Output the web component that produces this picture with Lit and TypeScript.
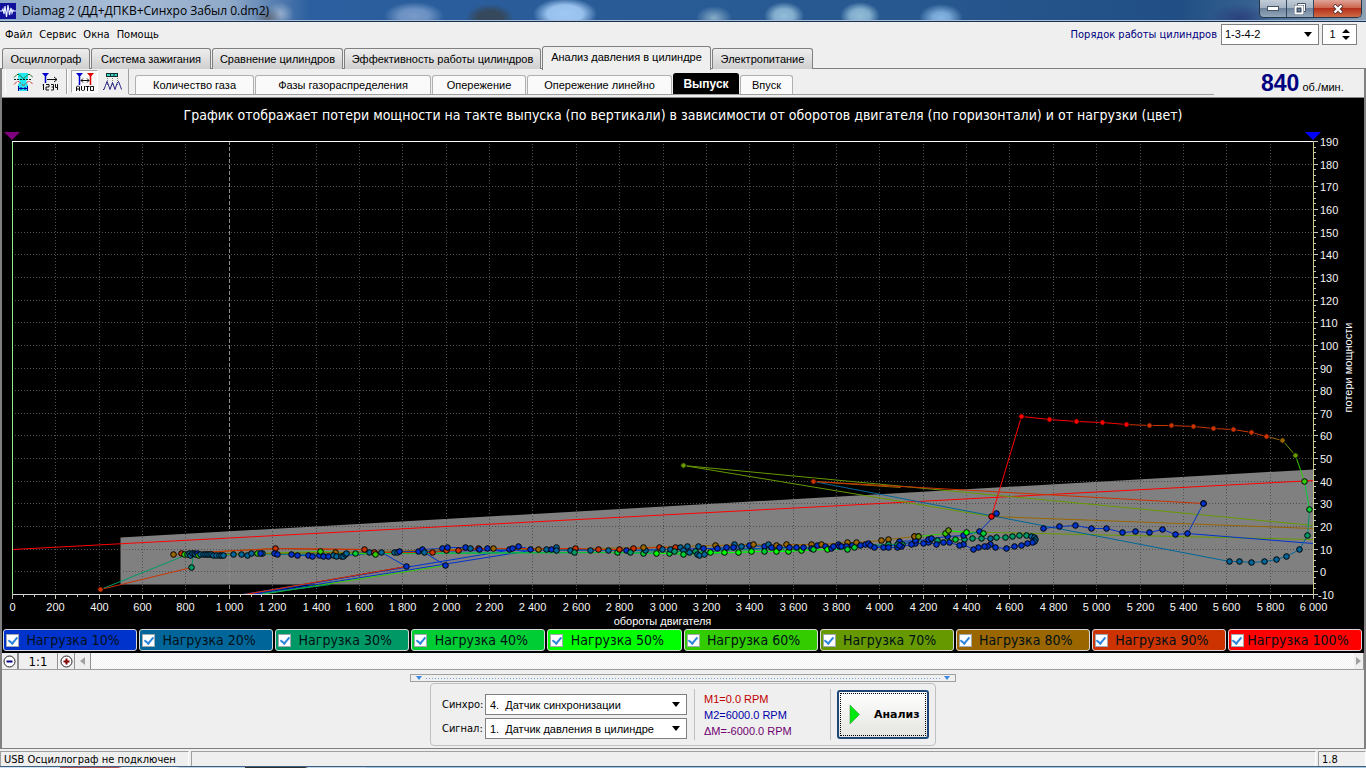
import { LitElement, html, svg, css } from "lit";
import { customElement, state } from "lit/decorators.js";
import { classMap } from "lit/directives/class-map.js";

const LOAD_COLORS = [
  "#0033cc", "#006699", "#009966", "#00cc33", "#00ff00",
  "#33cc00", "#669900", "#996600", "#cc3300", "#ff0000",
];

// Recorder units: 12..1313 covers 0..6000 rpm, 594..141 covers -10..190 loss.
const REC = { left: 12, right: 1313, top: 141, bottom: 594 };

// Each sample is "x,y,load" where load 1..10 stands for 10%..100%.
const parse = (s: string) =>
  s.trim().split(/\s+/).map((p) => p.split(",").map(Number));

const SWARM = parse(`
173,554,8 181,553,9 184,554,6 187,554,3 189,553,2 190,555,2 192,553,2 194,553,2 195,554,2 197,553,1
198,555,6 200,554,2 203,554,2 205,554,2 207,554,2 209,554,2 211,554,2 213,555,2 216,555,2 219,555,2
221,555,2 223,555,2 233,554,2 241,554,2 247,555,2 251,553,2 257,553,6 262,553,2 260,553,1 275,548,9
274,553,1 277,554,1 291,554,1 297,555,1 308,555,1 312,556,1 319,555,1 320,551,6 323,556,1 328,556,1
335,552,8 333,555,2 336,556,2 341,556,2 343,556,2 345,554,2 346,553,2 355,553,4 364,549,9 369,552,2
374,552,9 375,554,6 381,552,2 394,552,2 397,552,2 399,551,1 418,551,1 422,549,1 424,552,2 432,552,9
442,548,1 446,550,9 447,547,1 458,550,9 465,547,1 470,548,2 478,548,9 479,549,1 487,548,1 493,548,8
509,549,1 512,548,1 518,546,1 530,549,1 538,549,8 546,549,2 551,549,1 556,547,2 556,550,2 570,550,2
575,548,9 574,552,3 590,550,2 598,549,9 608,550,2 617,552,4 619,549,9 626,550,1 633,548,9 630,552,3
643,553,4 645,550,2 643,547,8 656,553,5 659,547,9 662,549,2 669,553,4 670,549,2 675,547,9 674,551,3
680,547,2 683,550,2 683,554,4 687,546,2 689,552,2 695,551,3 698,546,2 697,554,2 699,555,2 704,554,2 703,548,1
710,552,5 715,545,8 717,548,1 724,552,5 726,547,1 734,544,2 733,547,1 738,552,5 741,546,2 749,545,1
753,544,8 751,551,5 764,546,1 764,551,4 768,544,2 771,547,1 776,545,8 776,551,5 779,547,1 786,544,8
788,551,5 789,547,1 796,547,1 801,550,5 803,547,1 811,544,8 811,548,1 813,549,4 817,545,1 821,544,8
825,546,1 827,549,5 831,548,1 833,546,1 838,544,1 839,546,1 841,546,1 847,542,8 846,546,1 847,549,4
852,545,1 856,542,8 854,547,4 860,545,1 865,544,1 868,543,1 870,545,1 874,547,1 881,540,8 883,547,1
888,539,8 888,544,3 888,547,1 897,547,1 899,541,1 902,544,3 914,536,8 915,540,1 918,536,7`);

const TRACES = [
  // upper returning branch and the loop near 4 700 rpm
  `897,544,3 915,541,3 929,541,3 937,540,3 955,539,4 964,539,3 972,538,3 981,538,3 990,538,2 996,537,3 1005,537,3 1012,536,3
   1019,535,3 1026,535,3 1031,536,2 1034,537,2 1035,539,2 1034,541,2 1032,542,1 1027,543,1 1021,545,1 1014,546,1 1006,548,1
   995,547,1 990,544,1 987,546,1 984,546,1 978,547,1 973,549,1 963,544,1 959,545,1 949,542,1 943,542,1 936,544,1
   928,542,1 923,543,1 915,543,1 911,544,1 901,546,1`,
  `899,545,1 915,540,1 928,539,1 931,538,1 947,536,1 963,535,1 979,531,1 996,513,1 991,516,10 1021,416,10`,
  `914,536,8 918,536,7 945,533,6 948,530,7 966,532,5 983,533,4`,
  // full-load sweep
  `1021,416,10 1049,419,10 1076,421,10 1102,422,10 1126,424,10 1149,425,9 1171,425,9 1193,426,9 1213,428,9 1233,429,9
   1251,432,9 1266,436,9 1282,440,8 1295,455,7 1304,481,6 1309,509,4 1307,535,3 1299,549,2 1286,556,2 1276,559,2
   1264,561,2 1251,562,2 1239,561,2 1229,561,2 813,481,2`,
  `813,481,9 1203,503,9 1203,503,1 1187,533,1 1175,534,1 1162,529,1 1149,532,1 1135,531,1 1122,532,1 1106,528,1 1091,528,1
   1075,525,1 1059,526,1 1043,528,1`,
  `683,465,7`, `100,589,9`, `191,567,3`, `406,566,1`, `445,565,1`,
].map(parse);

// Plain links between distant samples: x1,y1,x2,y2,load.
const LINKS = [
  [12, 549, 1313, 480, 10], [683, 465, 1313, 525, 7], [683, 465, 991, 516, 7], [991, 516, 1313, 528, 8],
  [813, 481, 900, 487, 8], [948, 531, 1313, 539, 7], [1187, 533, 1313, 543, 1], [100, 589, 187, 554, 3],
  [100, 589, 191, 567, 9], [191, 567, 193, 554, 3], [242, 594, 525, 547, 1], [246, 594, 406, 566, 10],
  [250, 594, 406, 566, 1], [254, 594, 530, 550, 1], [244, 594, 406, 566, 9], [260, 594, 445, 565, 6],
  [262, 593, 330, 584, 3], [381, 552, 406, 566, 1], [424, 552, 445, 565, 1], [181, 553, 275, 548, 8],
  [275, 548, 364, 549, 9], [447, 550, 487, 549, 9], [399, 551, 600, 549, 1], [710, 549, 900, 545, 1],
];

const MAIN_TABS = ["Осциллограф", "Система зажигания", "Сравнение цилиндров", "Эффективность работы цилиндров", "Анализ давления в цилиндре", "Электропитание"];
const SUB_TABS = ["Количество газа", "Фазы газораспределения", "Опережение", "Опережение линейно", "Выпуск", "Впуск"];

@customElement("power-loss-chart")
class PowerLossChart extends LitElement {
  @state() private w = 1362;
  @state() private h = 502;
  private ro?: ResizeObserver;

  static styles = css`
    :host { display: block; flex: 1; min-height: 0; overflow: hidden; }
    svg { display: block; width: 100%; height: 100%; }
    text { font: 11px "Liberation Sans", Arial, sans-serif; fill: #f4f4f4; }
    .grid { stroke: #505050; stroke-dasharray: 1 2; }
    .ref { stroke: #8c8c8c; stroke-dasharray: 4 2; }
    .tick { stroke: #c8c8b8; }
    .mid { text-anchor: middle; }
    .axis { font-size: 11px; fill: #ffffff; text-anchor: middle; }
  `;

  connectedCallback() {
    super.connectedCallback();
    this.ro = new ResizeObserver(() => {
      this.w = this.clientWidth;
      this.h = this.clientHeight;
    });
    this.ro.observe(this);
  }
  disconnectedCallback() {
    this.ro?.disconnect();
    super.disconnectedCallback();
  }

  render() {
    const L = 10, R = this.w - 51, T = 15, B = this.h - 35;
    const kx = (R - L) / (REC.right - REC.left), ky = (B - T) / (REC.bottom - REC.top);
    const X = (x: number) => L + (x - REC.left) * kx + 0.5;
    const Y = (y: number) => T + (y - REC.top) * ky + 0.5;
    const rx = (rpm: number) => Math.round(L + ((R - L) * rpm) / 6000) + 0.5;
    const ly = (v: number) => Math.round(B - ((B - T) * (v + 10)) / 200) + 0.5;
    const xs = Array.from({ length: 31 }, (_, i) => i * 200);
    const ys = Array.from({ length: 21 }, (_, i) => i * 10 - 10);
    const xm = Array.from({ length: 121 }, (_, i) => i * 50);
    const ym = Array.from({ length: 81 }, (_, i) => i * 2.5 - 10);
    const label = (n: number) => (n < 1000 ? String(n) : `${Math.floor(n / 1000)} ${String(n % 1000).padStart(3, "0")}`);
    const dot = (p: number[]) => svg`<circle cx=${X(p[0])} cy=${Y(p[1])} r="2.8" fill=${LOAD_COLORS[p[2] - 1]} stroke="#000"></circle>`;
    const seg = (a: number[], b: number[], c: number) => svg`<line x1=${X(a[0])} y1=${Y(a[1])} x2=${X(b[0])} y2=${Y(b[1])} stroke=${LOAD_COLORS[c - 1]}></line>`;
    const band = LOAD_COLORS.map((c, i) => {
      const pts = SWARM.filter((p) => p[2] === i + 1);
      return svg`<polyline fill="none" stroke=${c} points=${pts.map((p) => `${X(p[0])},${Y(p[1])}`).join(" ")}></polyline>`;
    });
    return html`<svg role="img" aria-label="Потери мощности от оборотов двигателя">
      <polygon fill="#808080" points="${X(120)},${Y(537)} ${X(1313)},${Y(469)} ${X(1313)},${Y(584)} ${X(120)},${Y(584)}"></polygon>
      ${xs.slice(1, 30).map((v) => svg`<line class=${v === 1000 ? "ref" : "grid"} x1=${rx(v)} x2=${rx(v)} y1=${T} y2=${B}></line>`)}
      ${ys.slice(1, 20).map((v) => svg`<line class="grid" x1=${L} x2=${R} y1=${ly(v)} y2=${ly(v)}></line>`)}
      ${LINKS.map((l) => seg([l[0], l[1]], [l[2], l[3]], l[4]))}
      ${band}
      ${TRACES.map((t) => t.slice(1).map((p, i) => seg(t[i], p, p[2])))}
      ${SWARM.map(dot)}
      ${TRACES.map((t) => t.filter((p, i) => !(i === t.length - 1 && t.length > 1 && p[0] === 813)).map(dot))}
      <path d="M${L + 0.5} ${T + 0.5}V${B}" stroke="#90ee90"></path>
      <path d="M${R + 0.5} ${T + 0.5}V${B}" stroke="#c8c882"></path>
      <path d="M${L} ${T + 0.5}H${R}" stroke="#fff"></path>
      <path d="M${L} ${B + 0.5}H${R + 5}" stroke="#d8d8d8"></path>
      ${xm.map((v) => svg`<line class="tick" x1=${rx(v)} x2=${rx(v)} y1=${B} y2=${B + (v % 200 ? 3 : 5)}></line>`)}
      ${ym.map((v) => svg`<line class="tick" x1=${R} x2=${R + (v % 10 ? 3 : 5)} y1=${ly(v)} y2=${ly(v)}></line>`)}
      ${xs.map((v) => svg`<text class="mid" x=${rx(v)} y=${B + 17}>${label(v)}</text>`)}
      ${ys.map((v) => svg`<text x=${R + (v < 0 ? 5 : 7)} y=${ly(v) + 4}>${v}</text>`)}
      <text class="axis" x=${(L + R) / 2} y=${B + 31}>обороты двигателя</text>
      <text class="axis" transform="translate(${R + 39} ${T + (B - T) / 2}) rotate(-90)">потери мощности</text>
      <path d="M${L - 8} ${T - 9}h16l-8 8z" fill="#800080"></path>
      <path d="M${R - 8} ${T - 9}h16l-8 8z" fill="#0000ff"></path>
    </svg>`;
  }
}

const arrow = html`<svg class="arrow" width="8" height="5" viewBox="0 0 8 5"><path d="M0 0h8L4 5z" fill="#000"></path></svg>`;

@customElement("app-root")
class AppRoot extends LitElement {
  @state() private tab = 4;
  @state() private sub = 4;
  @state() private order = 1;

  static styles = css`
    :host { display: flex; flex-direction: column; height: 100vh; min-height: 560px; overflow: hidden; background: #efefef; color: #000; font: 11px "Liberation Sans", Arial, sans-serif; }
    * { box-sizing: border-box; }
    button, input, select { font: inherit; color: inherit; margin: 0; padding: 0; border: 0; border-radius: 0; background: none; }
    .titlebar { flex: none; height: 22px; display: flex; align-items: center; border-bottom: 1px solid #1b304c; box-shadow: inset 0 -1px #a8bfda;
      background:
        radial-gradient(ellipse 24px 14px at 490px 18px, #39434ccc, #39434ccc 50%, transparent),
        radial-gradient(ellipse 32px 16px at 565px 14px, #a9d0fbee, #a9d0fbdd 55%, transparent),
        radial-gradient(ellipse 18px 12px at 714px 18px, #9fc2d4cc, transparent),
        radial-gradient(ellipse 20px 14px at 784px 16px, #a2cbe2dd, #a2cbe2bb 50%, transparent),
        radial-gradient(ellipse 20px 14px at 860px 16px, #a2cbe2dd, #a2cbe2bb 50%, transparent),
        radial-gradient(ellipse 22px 14px at 941px 18px, #94c4f0dd, #94c4f0bb 40%, transparent),
        radial-gradient(ellipse 30px 14px at 414px 16px, #8aa9d4cc, #8aa9d4aa 50%, transparent),
        radial-gradient(ellipse 30px 14px at 1240px 18px, #2b3a7acc, transparent),
        radial-gradient(ellipse 14px 12px at 268px 18px, #5d6470cc, transparent),
        radial-gradient(ellipse 14px 12px at 280px 14px, #a9bdd4cc, transparent),
        linear-gradient(90deg, #8ba7c9 0, #a9bdd6 120px, #8fa9c9 230px, #5d83b3 270px, #2b5f9f 310px, #27588f 900px, #214f85 1180px, #35608f 1250px, #8fa2b4 100%); }
    .logo { flex: none; margin-right: 6px; }
    .title { margin: 0; font: 12px "Open Sans", "Noto Sans", sans-serif; flex: 1; color: #000; }
    .winbtns { align-self: flex-start; display: flex; height: 18px; margin-right: 4px; border: 1px solid #23354b; border-top: 0; border-radius: 0 0 5px 5px; overflow: hidden; }
    .winbtn { width: 27px; display: grid; place-items: center; border-right: 1px solid #33475f; background: linear-gradient(#c3cdd8 0, #a5b3c3 45%, #6f849c 50%, #93a6ba 100%); }
    .close { width: 47px; border: 0; background: linear-gradient(#e0a497 0, #cc6650 45%, #b5301a 50%, #cf6a45 100%); }
    .menubar { flex: none; height: 24px; display: flex; align-items: center; padding-right: 9px; font: 11px "DejaVu Sans Condensed", "Noto Sans", sans-serif; }
    .menu { display: flex; flex: 1; gap: 7px; padding-left: 5px; }
    .menu button { padding-top: 1px; }
    .order { display: flex; align-items: center; gap: 4px; color: #000080; font-family: "DejaVu Sans Condensed", sans-serif; }
    .field { display: grid; align-items: center; background: #fff; border: 1px solid #7f7f7f; color: #000; height: 21px; }
    .field select { grid-area: 1 / 1; width: 100%; height: 100%; appearance: none; outline: 0; padding-left: 4px; }
    .arrow { grid-area: 1 / 1; justify-self: end; margin-right: 6px; pointer-events: none; }
    .f-order { width: 98px; }
    .f-order select { padding-left: 3px; font: 11px "Liberation Sans", sans-serif; }
    .spin { grid-template-columns: 1fr 14px; width: 35px; margin-left: -1px; font: 11px "Liberation Sans", sans-serif; }
    .spin input { appearance: textfield; width: 100%; text-align: center; outline: 0; }
    .spin input::-webkit-inner-spin-button { appearance: none; }
    .spinbtns { display: grid; gap: 3px; padding-right: 4px; }
    .spinbtns button { display: grid; }
    .tabs { flex: none; height: 23px; display: grid; grid-template-columns: 88px 120px 131px 197px 169px 101px; gap: 1px; align-items: end; padding-left: 2px; border-bottom: 1px solid #808080; }
    .tab { height: 21px; border: 1px solid #808080; border-bottom: 0; border-radius: 3px 3px 0 0; background: linear-gradient(#eeeeee, #cfcfcf); white-space: nowrap; }
    .tab.on { height: 24px; padding-bottom: 3px; margin-bottom: -1px; background: #efefef; }
    .body { flex: 1; min-height: 0; display: flex; flex-direction: column; border: solid #808080; border-width: 0 2px 1px; }
    .toolbar { flex: none; height: 29px; display: flex; align-items: flex-start; padding-left: 3px; border-bottom: 1px solid #8a8a8a; }
    .tools { display: flex; flex: none; height: 25px; align-items: center; border-right: 1px solid #a0a0a0; padding: 0 3px; border-left: 1px solid #fff; }
    .tools button { width: 27px; height: 23px; display: grid; place-items: center; }
    .tools button.down { border: 1px solid #a8a8a8; background: #f9f9f9; border-right-color: #fff; border-bottom-color: #fff; }
    .subs { flex: 1; height: 26px; display: grid; grid-template-columns: 119px 176px 94px 145px 66px 53px; gap: 1px; align-items: end; padding-left: 6px; border-bottom: 1px solid #a0a0a0; }
    .sub { height: 19px; border: 1px solid #b0b0b0; border-bottom: 0; border-radius: 3px 3px 0 0; background: #fafafa; white-space: nowrap; }
    .sub.on { height: 21px; border-color: #000; background: #000; color: #fff; font-weight: bold; font-size: 12px; }
    .rpm { display: flex; align-items: baseline; gap: 3px; width: 150px; padding-left: 47px; white-space: nowrap; line-height: 28px; }
    .rpm b { color: #000080; font-size: 23px; }
    .chart { flex: 1; min-height: 0; display: flex; flex-direction: column; background: #000; }
    .caption { flex: none; margin: 0; height: 28px; padding: 7px 0 0; text-align: center; color: #fff; font: 14px/20px "DejaVu Sans Condensed", Verdana, sans-serif; white-space: nowrap; }
    .legend { flex: none; display: grid; grid-template-columns: repeat(10, 1fr); gap: 2px; padding: 0 2px 2px 1px; }
    .item { display: flex; align-items: center; height: 22px; padding: 0 9px 0 2px; border: 1px solid #d8d8d8; border-radius: 3px; font: 14px "DejaVu Sans Condensed", Verdana, sans-serif; white-space: nowrap; color: #001018; }
    .item span { flex: 1; text-align: center; }
    .item input { appearance: none; flex: none; width: 13px; height: 13px; background: #fff; border: 1px solid #a0a8b0; display: grid; place-items: center; }
    .item input:checked::after { content: ""; width: 4px; height: 7px; margin-top: -2px; border: solid #2f86de; border-width: 0 2px 2px 0; rotate: 40deg; }
    .l1 { background: #0033cc; } .l2 { background: #006699; } .l3 { background: #009966; } .l4 { background: #00cc33; } .l5 { background: #00ff00; }
    .l6 { background: #33cc00; } .l7 { background: #669900; } .l8 { background: #996600; } .l9 { background: #cc3300; } .l10 { background: #ff0000; }
    .zoombar { flex: none; height: 17px; display: flex; border-bottom: 1px solid #9c9c9c; background: #f7f7f7; }
    .zoombar button { width: 16px; display: grid; place-items: center; background: #efefef; border-right: 1px solid #909090; }
    .zoombar .ratio { width: 40px; font: 13px "DejaVu Sans Condensed", sans-serif; border-left: 1px solid #909090; margin-right: 1px; }
    .track { flex: 1; background: repeating-conic-gradient(#ffffff 0 25%, #f0f0f0 0 50%) 0 0 / 2px 2px; }
    .zoombar .end { width: 10px; }
    .panel { flex: none; height: 78px; display: flex; flex-direction: column; align-items: center; padding-top: 4px; }
    .splitter { width: 546px; height: 8px; border: 1px solid #a0a0a0; display: flex; align-items: center; justify-content: space-between; gap: 4px; padding: 0 5px; }
    .splitter i { flex: 1; height: 1px; background: repeating-linear-gradient(90deg, #6aa7e6 0 1px, transparent 1px 3px); }
    .group { display: flex; width: 506px; height: 63px; margin-top: 1px; border: 1px solid #c0c0c0; border-radius: 4px; padding: 5px 4px 5px 11px; }
    .pick { display: grid; grid-template-columns: 43px 202px; row-gap: 3px; align-content: center; align-items: center; padding-top: 4px; font-family: "DejaVu Sans Condensed", sans-serif; }
    .pick .field { font-family: "Liberation Sans", sans-serif; }
    .marks { margin: 0 6px 0 7px; width: 137px; border: solid #c0c0c0; border-width: 0 1px; padding: 2px 0 0 9px; line-height: 16px; list-style: none; font-size: 11px; }
    .m1 { color: #c00000; } .m2 { color: #0000a8; } .m3 { color: #700070; }
    .analyze { width: 92px; height: 49px; margin-top: 1px; border: 2px solid #1d4777; border-radius: 3px; padding: 1px; background: linear-gradient(#ffffff, #e4e4e0); font: bold 11px "DejaVu Sans", sans-serif; }
    .analyze span { height: 100%; display: flex; align-items: center; gap: 14px; padding-left: 8px; border: 1px dotted #000; }
    .status { flex: none; height: 15px; margin-top: 2px; display: grid; grid-template-columns: 189px 1fr 48px; gap: 2px; font: 11px "DejaVu Sans Condensed", sans-serif; }
    .status div { border: 1px solid #a0a0a0; border-right-color: #fff; border-bottom: 0; padding: 1px 0 0 3px; white-space: nowrap; }
    .edge { flex: none; height: 2px; border-top: 1px solid #3d5f80; background: linear-gradient(90deg, #cfe0f0 60px, #b05050 60px 118px, #f4f4f4 122px 176px, #c0d4e8 180px 245px, #303030 245px 305px, #c0d4e8 308px 366px, #a9c4dd 366px); }
  `;

  render() {
    return html`
      <header class="titlebar">
        <svg class="logo" width="16" height="16" viewBox="0 0 16 16"><rect width="16" height="16" fill="#10109a"></rect><path d="M0 8h2l1-2 1 5 1-8 1.500 11L8 2l1.500 10L11 5l1 5 1-3 1 1h2" fill="none" stroke="#e6f0ff" stroke-width="1.200"></path></svg>
        <h1 class="title">Diamag 2 (ДД+ДПКВ+Синхро Забыл 0.dm2)</h1>
        <div class="winbtns">
          <button class="winbtn" aria-label="Свернуть"><svg width="12" height="5" viewBox="0 0 12 5"><rect x=".5" y=".5" width="11" height="4" fill="#fff" stroke="#455468"></rect></svg></button>
          <button class="winbtn" aria-label="Развернуть"><svg width="12" height="12" viewBox="0 0 12 12"><path d="M3.500.5h8v8h-2v-6h-6z" fill="#fff" stroke="#455468"></path><rect x="1.500" y="3.500" width="7" height="7" fill="none" stroke="#455468" stroke-width="3"></rect><rect x="1.500" y="3.500" width="7" height="7" fill="none" stroke="#fff" stroke-width="2"></rect><rect x="3.500" y="5.500" width="3" height="3" fill="none" stroke="#455468"></rect></svg></button>
          <button class="winbtn close" aria-label="Закрыть"><svg width="12" height="10" viewBox="0 0 12 10"><path d="M2 1l8 8M10 1l-8 8" stroke="#5a3030" stroke-width="4"></path><path d="M2.500 1.500l7 7M9.500 1.500l-7 7" stroke="#fff" stroke-width="2.400"></path></svg></button>
        </div>
      </header>
      <div class="menubar">
        <nav class="menu"><button>Файл</button><button>Сервис</button><button>Окна</button><button>Помощь</button></nav>
        <div class="order">
          <label for="order">Порядок работы цилиндров</label>
          <span class="field f-order"><select id="order"><option>1-3-4-2</option><option>1-2-4-3</option></select>${arrow}</span>
          <span class="field spin">
            <input type="number" aria-label="Цилиндр" .value=${String(this.order)}>
            <span class="spinbtns">
              <button aria-label="Больше" @click=${() => (this.order = Math.min(4, this.order + 1))}><svg width="8" height="4" viewBox="0 0 8 4"><path d="M0 4h8L4 0z"></path></svg></button>
              <button aria-label="Меньше" @click=${() => (this.order = Math.max(1, this.order - 1))}><svg width="8" height="4" viewBox="0 0 8 4"><path d="M0 0h8L4 4z"></path></svg></button>
            </span>
          </span>
        </div>
      </div>
      <div class="tabs" role="tablist">
        ${MAIN_TABS.map((t, i) => html`<button role="tab" class=${classMap({ tab: true, on: i === this.tab })} @click=${() => (this.tab = i)}>${t}</button>`)}
      </div>
      <main class="body">
        <div class="toolbar">
          <div class="tools">
            <button aria-label="Окно усреднения"><svg width="20" height="20" viewBox="0 0 20 20" fill="none"><path d="M5 1h10v5l-2 3.500 2 3.500v6H5v-6l2-3.500L5 6z" fill="#20e8f0"></path><path d="M1 5.500l3-3h2l3 3 1.500 1 1.500-1 3-3h2l3 3" stroke="#207030"></path><path d="M1 12.500l3-3h2l3 3 1.500 1 1.500-1 3-3h2l3 3" stroke="#c03030" stroke-dasharray="4 1"></path><path d="M1 7.500h18" stroke="#002020" stroke-dasharray="2 1"></path><path d="M5.500 14v5M14.500 14v5M6 16.500h8M8 15v3M12 15v3" stroke="#0000a0"></path></svg></button>
            <button aria-label="Маркер по номеру"><svg width="18" height="19" viewBox="0 0 18 19" fill="none"><path d="M1 1h7L4.500 5z" fill="#0000d0"></path><path d="M4.500 4v7" stroke="#0000d0" stroke-width="1.500"></path><path d="M6 7.500h10M13 5l3 2.500-3 2.500M2.500 12v6M1.500 13h1M5 12.500h3v2.500H5v3h3M10 12.500h2.500v5.500H10M10.500 15h2M14.500 12v3.500H17M16.500 12v6" stroke="#101010"></path></svg></button>
          </div>
          <div class="tools">
            <button class="down" aria-label="Авто маркеры"><svg width="20" height="20" viewBox="0 0 20 20" fill="none"><path d="M1 1h7L4.500 5z" fill="#0000d0"></path><path d="M4.500 4v9" stroke="#0000d0" stroke-width="1.500"></path><path d="M12 1h7l-3.500 4z" fill="#e00000"></path><path d="M15.500 4v9" stroke="#e00000" stroke-width="1.500"></path><path d="M6 8.500h8M8 6.500l-2 2 2 2M12 6.500l2 2-2 2M1.500 19v-4l1-1h1l1 1v4M1.500 17h3M6.500 14v4l1 .5h1l1-.5v-4M10.500 14.500h4M12.500 14.500V19M15.500 14.500h3v4h-3z" stroke="#101010"></path></svg></button>
            <button aria-label="Циклы"><svg width="20" height="19" viewBox="0 0 20 19" fill="none"><rect x="4.500" y="1.500" width="11" height="3" fill="#40d0c0" stroke="#103030"></rect><path d="M8.500 1v4M12 1v4" stroke="#103030"></path><path d="M5.500 6v8M10.500 6v8M15.500 6v8" stroke="#808080" stroke-dasharray="1 1"></path><path d="M1 17.500h1l1.500-4 1.500-4 2 5 1 3 2.500-7 2.500 7 2-6 1.500-2 2 5 1 3" stroke="#202080"></path></svg></button>
          </div>
          <div class="subs" role="tablist">
            ${SUB_TABS.map((t, i) => html`<button role="tab" class=${classMap({ sub: true, on: i === this.sub })} @click=${() => (this.sub = i)}>${t}</button>`)}
          </div>
          <div class="rpm"><b>840</b><span>об./мин.</span></div>
        </div>
        <section class="chart">
          <h2 class="caption">График отображает потери мощности на такте выпуска (по вертикали) в зависимости от оборотов двигателя (по горизонтали) и от нагрузки (цвет)</h2>
          <power-loss-chart></power-loss-chart>
          <div class="legend">
            ${LOAD_COLORS.map((_, i) => html`<label class="item l${i + 1}"><input type="checkbox" checked><span>Нагрузка ${(i + 1) * 10}%</span></label>`)}
          </div>
        </section>
        <div class="zoombar">
          <button aria-label="Уменьшить"><svg width="13" height="13" viewBox="0 0 13 13"><circle cx="6.500" cy="6.500" r="5.500" fill="#fff" stroke="#202020"></circle><path d="M3.500 6.500h6" stroke="#000080" stroke-width="2"></path></svg></button>
          <button class="ratio">1:1</button>
          <button aria-label="Увеличить"><svg width="13" height="13" viewBox="0 0 13 13"><circle cx="6.500" cy="6.500" r="5.500" fill="#fff" stroke="#202020"></circle><path d="M3.500 6.500h6M6.500 3.500v6" stroke="#800000" stroke-width="2"></path></svg></button>
          <button aria-label="Влево"><svg width="5" height="8" viewBox="0 0 5 8"><path d="M5 0v8L0 4z" fill="#a0a0a0"></path></svg></button>
          <div class="track"></div>
          <button class="end" aria-label="Вправо"><svg width="5" height="8" viewBox="0 0 5 8"><path d="M0 0v8l5-4z" fill="#a0a0a0"></path></svg></button>
        </div>
        <section class="panel">
          <div class="splitter"><svg width="6" height="4"><path d="M0 0h6L3 4z" fill="#3b8ae0"></path></svg><i></i><svg width="6" height="4"><path d="M0 0h6L3 4z" fill="#3b8ae0"></path></svg></div>
          <div class="group">
            <div class="pick">
              <label for="sync">Синхро:</label>
              <span class="field"><select id="sync"><option>4.&nbsp; Датчик синхронизации</option></select>${arrow}</span>
              <label for="signal">Сигнал:</label>
              <span class="field"><select id="signal"><option>1.&nbsp; Датчик давления в цилиндре</option></select>${arrow}</span>
            </div>
            <ul class="marks"><li class="m1">M1=0.0 RPM</li><li class="m2">M2=6000.0 RPM</li><li class="m3">ΔM=-6000.0 RPM</li></ul>
            <button class="analyze"><span><svg width="11" height="19" viewBox="0 0 11 19"><path d="M1 0v19l9.500-9.500z" fill="#00e810" stroke="#40a040" stroke-width=".6"></path></svg>Анализ</span></button>
          </div>
        </section>
      </main>
      <footer class="status"><div>USB Осциллограф не подключен</div><div></div><div>1.8</div></footer>
      <div class="edge"></div>
    `;
  }
}
